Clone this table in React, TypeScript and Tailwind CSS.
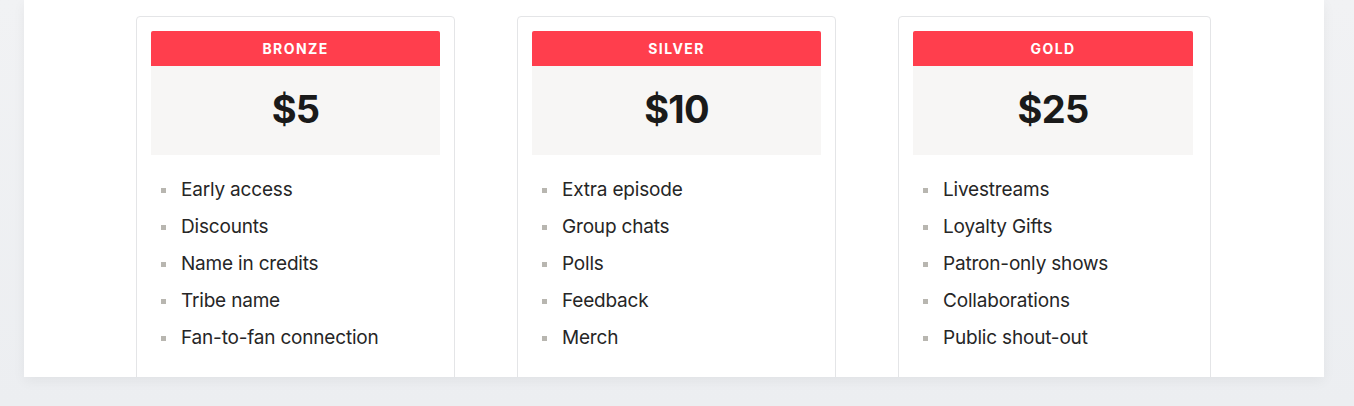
import React from 'react';

interface Tier {
  name: string;
  price: string;
  perks: string[];
  width: string;
}

const tiers: Tier[] = [
  {
    name: 'BRONZE',
    price: '$5',
    perks: ['Early access', 'Discounts', 'Name in credits', 'Tribe name', 'Fan-to-fan connection'],
    width: 'w-[319px] pr-[14px]',
  },
  {
    name: 'SILVER',
    price: '$10',
    perks: ['Extra episode', 'Group chats', 'Polls', 'Feedback', 'Merch'],
    width: 'w-[319px] pr-[14px]',
  },
  {
    name: 'GOLD',
    price: '$25',
    perks: ['Livestreams', 'Loyalty Gifts', 'Patron-only shows', 'Collaborations', 'Public shout-out'],
    width: 'w-[313px] pr-[17px]',
  },
];

const TierCard: React.FC<{ tier: Tier }> = ({ tier }) => (
  <div className={`${tier.width} h-[400px] shrink-0 rounded-[4px] border border-[#e4e5e7] bg-white pl-[14px] pt-[14px]`}>
    <div className="flex h-[35px] items-center justify-center rounded-t-[2px] bg-[#ff3e4d] text-[14px] font-bold tracking-[0.1em] text-white">
      {tier.name}
    </div>
    <div className="flex h-[89px] items-center justify-center bg-[#f7f6f5] pb-[2px] text-[38px] font-bold tracking-[-0.02em] text-[#1a1a1a]">
      {tier.price}
    </div>
    <ul className="pt-[17px] pl-[10px]">
      {tier.perks.map((perk) => (
        <li key={perk} className="flex h-[37px] items-center text-[19px] tracking-[-0.01em] text-[#262626]">
          <span className="mr-[15px] h-[5px] w-[5px] bg-[#b8b6b0]" />
          {perk}
        </li>
      ))}
    </ul>
  </div>
);

export default function App() {
  return (
    <div
      className="h-[406px] w-full bg-gradient-to-b from-[#f1f2f4] to-[#eceef1]"
      style={{ fontFamily: 'Inter, "Open Sans", sans-serif' }}
    >
      <div className="ml-6 h-[377px] w-[1300px] overflow-hidden bg-white shadow-[0_4px_12px_rgba(0,0,0,0.05)]">
        <div className="flex gap-[62px] pl-[112px] pt-4">
          {tiers.map((tier) => (
            <TierCard key={tier.name} tier={tier} />
          ))}
        </div>
      </div>
    </div>
  );
}
